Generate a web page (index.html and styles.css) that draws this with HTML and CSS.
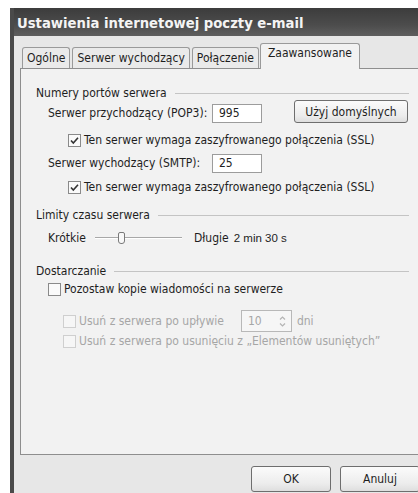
FILE: index.html
```html
<!DOCTYPE html>
<html lang="pl">
<head>
<meta charset="utf-8">
<title>Ustawienia internetowej poczty e-mail</title>
<link rel="stylesheet" href="styles.css">
</head>
<body>
<div class="window">
  <div class="titlebar">
    <span class="title">Ustawienia internetowej poczty e-mail</span>
    <span class="close"><svg width="13" height="13" viewBox="0 0 13 13"><path d="M2 2 L11 11 M11 2 L2 11" stroke="#fff" stroke-width="2.4" stroke-linecap="square"/></svg></span>
  </div>
  <div class="body">
    <div class="tabs">
      <span class="tab">Ogólne</span>
      <span class="tab">Serwer wychodzący</span>
      <span class="tab">Połączenie</span>
      <span class="tab active">Zaawansowane</span>
    </div>
    <div class="panel">
      <div class="group-head"><span>Numery portów serwera</span><i class="rule"></i></div>
      <div class="row pop-row">
        <span class="label">Serwer przychodzący (POP3):</span>
        <span class="field">995</span>
        <span class="btn btn-default">Użyj domyślnych</span>
      </div>
      <div class="row ssl1 indent2">
        <span class="box"><svg width="11" height="11" viewBox="0 0 11 11"><path d="M2 5.5 L4.3 8 L9 2.8" fill="none" stroke="#333" stroke-width="1.6"/></svg></span>
        <span>Ten serwer wymaga zaszyfrowanego połączenia (SSL)</span>
      </div>
      <div class="row smtp-row">
        <span class="label">Serwer wychodzący (SMTP):</span>
        <span class="field">25</span>
      </div>
      <div class="row ssl2 indent2">
        <span class="box"><svg width="11" height="11" viewBox="0 0 11 11"><path d="M2 5.5 L4.3 8 L9 2.8" fill="none" stroke="#333" stroke-width="1.6"/></svg></span>
        <span>Ten serwer wymaga zaszyfrowanego połączenia (SSL)</span>
      </div>

      <div class="group-head g2"><span>Limity czasu serwera</span><i class="rule"></i></div>
      <div class="row slider-row">
        <span>Krótkie</span>
        <span class="slider"><i class="track"></i><i class="thumb"></i></span>
        <span>Długie</span>
        <span class="time">2 min 30 s</span>
      </div>

      <div class="group-head g3"><span>Dostarczanie</span><i class="rule"></i></div>
      <div class="row keep-row indent1">
        <span class="box"></span>
        <span>Pozostaw kopie wiadomości na serwerze</span>
      </div>
      <div class="row del1 indent3 disabled">
        <span class="box"></span>
        <span>Usuń z serwera po upływie</span>
        <span class="spin"><span class="spin-val">10</span><span class="spin-btns"><svg width="9" height="15" viewBox="0 0 9 15"><path d="M2 5.5 L4.5 3 L7 5.5 M2 9.5 L4.5 12 L7 9.5" fill="none" stroke="#b4b4b4" stroke-width="1.2"/></svg></span></span>
        <span>dni</span>
      </div>
      <div class="row del2 indent3 disabled">
        <span class="box"></span>
        <span>Usuń z serwera po usunięciu z „Elementów usuniętych”</span>
      </div>
    </div>
    <div class="actions">
      <span class="btn btn-action">OK</span>
      <span class="btn btn-action">Anuluj</span>
    </div>
  </div>
</div>
</body>
</html>
```

FILE: styles.css
```css
html, body {
  margin: 0;
  padding: 0;
  background: #ffffff;
  overflow: hidden;
  width: 418px;
  height: 493px;
}

body {
  font-family: "DejaVu Sans Condensed", "DejaVu Sans", sans-serif;
  font-size: 12px;
  color: #1e1e1e;
}

.window {
  margin: 8px 0 0 10px;
  width: 430px;
  height: 490px;
  border-left: 4px solid #4a4a4a;
  background: #e7e7e7;
}

.titlebar {
  height: 28px;
  background: linear-gradient(#3c3c3c, #4c4c4c 60%, #5e5e5e);
  display: flex;
  align-items: center;
  justify-content: space-between;
  padding-left: 3px;
}

.title {
  color: #f4f4f4;
  font-weight: bold;
  font-size: 14.7px;
}

.close {
  width: 21px;
  height: 20px;
  margin-right: 3px;
  border: 1px solid #d8d8d8;
  border-radius: 3px;
  background: #8c8c8c;
  display: flex;
  align-items: center;
  justify-content: center;
}

.body {
  padding: 8px 0 0 6px;
}

/* tab strip */
.tabs {
  display: flex;
  align-items: flex-end;
  height: 24px;
  padding-left: 2px;
  position: relative;
  z-index: 1;
}

.tab {
  height: 20px;
  line-height: 20px;
  padding: 0 4px;
  margin-right: 2px;
  border: 1px solid #9a9a9a;
  border-bottom: none;
  border-radius: 3px 3px 0 0;
  background: #eaeaea;
}

.tab.active {
  height: 25px;
  line-height: 19px;
  padding: 0 7px;
  background: #f2f2f2;
  margin-bottom: -1px;
  margin-left: -1px;
}

/* tab page */
.panel {
  height: 369px;
  border: 1px solid #8e8e8e;
  background: #f2f2f2;
  padding: 16px 0 0 15px;
  display: flex;
  flex-direction: column;
}

.group-head {
  display: flex;
  align-items: center;
  width: 373px;
  height: 16px;
  flex: none;
}

.group-head .rule {
  flex: 1;
  height: 1px;
  background: #c4c4c4;
  margin-left: 8px;
}

.row {
  display: flex;
  align-items: center;
  height: 20px;
  flex: none;
}

.pop-row {
  height: 24px;
  padding-left: 12px;
}

.ssl1 { margin-top: 5px; }
.smtp-row { margin-top: 3px; padding-left: 12px; }
.ssl2 { margin-top: 4px; }
.g2 { margin-top: 10px; }
.slider-row { margin-top: 5px; padding-left: 12px; }
.g3 { margin-top: 15px; }
.del1 { margin-top: 11px; height: 22px; }
.del2 { margin-top: -1px; }

.label {
  width: 164px;
}

.field {
  width: 42px;
  height: 17px;
  line-height: 17px;
  border: 1px solid #9c9c9c;
  background: #fff;
  padding-left: 6px;
}

.btn {
  border: 1px solid #6e6e6e;
  border-radius: 3px;
  background: linear-gradient(#fbfbfb, #ececec 70%, #dedede);
  display: flex;
  align-items: center;
  justify-content: center;
}

.btn-default {
  margin-left: 32px;
  width: 112px;
  height: 21px;
  margin-top: -3px;
}

.indent2 { padding-left: 32px; }
.indent1 { padding-left: 12px; }
.indent3 { padding-left: 27px; }

.box {
  width: 11px;
  height: 11px;
  border: 1px solid #8a8a8a;
  background: #fafafa;
  margin-right: 3px;
  display: flex;
  align-items: center;
  justify-content: center;
  flex: none;
}

/* trackbar */
.slider {
  position: relative;
  width: 87px;
  height: 16px;
  margin: 0 12px 0 9px;
}

.slider .track {
  position: absolute;
  left: 0;
  right: 0;
  top: 7px;
  height: 1px;
  background: #a8a8a8;
  border-bottom: 1px solid #fff;
}

.slider .thumb {
  position: absolute;
  left: 23px;
  top: 2px;
  width: 5px;
  height: 10px;
  border: 1px solid #7a7a7a;
  border-radius: 2px 2px 3px 3px;
  background: #f8f8f8;
}

.time {
  margin-left: 5px;
  font-family: "Liberation Sans", sans-serif;
  font-size: 11.5px;
}

.disabled {
  color: #a6a6a6;
}

.disabled .box {
  border-color: #cfcfcf;
  background: #f6f6f6;
}

.spin {
  display: flex;
  align-items: center;
  width: 49px;
  height: 20px;
  border: 1px solid #b8b8b8;
  margin: 0 5px 0 17px;
  background: #f6f6f6;
}

.spin-val {
  flex: 1;
  padding-left: 6px;
}

.spin-btns {
  width: 12px;
  height: 17px;
  display: flex;
  align-items: center;
  justify-content: center;
  margin-right: 2px;
}

/* dialog buttons */
.actions {
  display: flex;
  padding-left: 231px;
  margin-top: 11px;
}

.btn-action {
  width: 78px;
  height: 24px;
  margin-right: 9px;
  flex: none;
}
```
